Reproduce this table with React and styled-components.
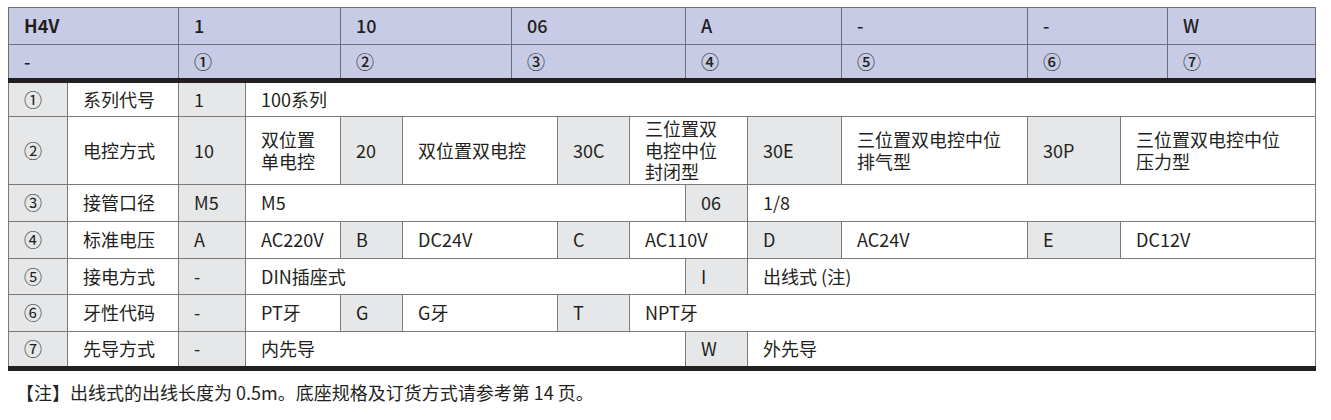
import React from 'react'
import styled, { createGlobalStyle } from 'styled-components'

const GlobalStyle = createGlobalStyle`
  body {
    margin: 0;
    background: #fff;
    font-family: "Noto Sans CJK SC", "Noto Sans", sans-serif;
    color: #231f20;
  }
`

const Page = styled.div`
  padding: 7px 8px 0 8px;
  width: 1307px;
`

const Table = styled.table`
  width: 1307px;
  table-layout: fixed;
  border-collapse: collapse;
  font-size: 18px;
  line-height: 21.6px;
  border-bottom: 5px solid #231f20;
`

const HeadRow = styled.tr`
  height: ${(p) => p.$h}px;
  background: #c8cbe6;
  ${(p) => p.$last && 'border-bottom: 5px solid #231f20;'}
`

const HeadCell = styled.th`
  text-align: left;
  font-weight: ${(p) => (p.$bold ? 600 : 500)};
  padding: 0 15px;
  border: 1px solid #6f6f78;
  vertical-align: middle;
`

const Row = styled.tr`
  height: ${(p) => p.$h}px;
`

const Cell = styled.td`
  padding: 0 15px;
  border: 1px solid #7a7a7a;
  background: ${(p) => (p.$shade ? '#e6e7e8' : '#fff')};
  vertical-align: middle;
  white-space: nowrap;
`

const Note = styled.p`
  margin: 10px 0 0 0;
  padding-left: 8px;
  font-size: 18px;
  line-height: 22px;
`

const widths = [59, 111, 67, 95, 62, 109, 46, 72, 56, 62, 94, 186, 93, 47, 148]

const codes = [
  { code: 'H4V', sub: '-', span: 2, bold: true },
  { code: '1', sub: '①', span: 2 },
  { code: '10', sub: '②', span: 2 },
  { code: '06', sub: '③', span: 3 },
  { code: 'A', sub: '④', span: 2 },
  { code: '-', sub: '⑤', span: 1 },
  { code: '-', sub: '⑥', span: 2 },
  { code: 'W', sub: '⑦', span: 1 },
]

// each cell: [text, colSpan, shaded]
const rows = [
  { h: 36, cells: [['①', 1, 1], ['系列代号'], ['1', 1, 1], ['100系列', 12]] },
  {
    h: 68,
    cells: [
      ['②', 1, 1], ['电控方式'], ['10', 1, 1], ['双位置\n单电控'], ['20', 1, 1], ['双位置双电控', 2],
      ['30C', 1, 1], ['三位置双\n电控中位\n封闭型', 2], ['30E', 1, 1], ['三位置双电控中位\n排气型'],
      ['30P', 1, 1], ['三位置双电控中位\n压力型', 2],
    ],
  },
  { h: 37, cells: [['③', 1, 1], ['接管口径'], ['M5', 1, 1], ['M5', 6], ['06', 1, 1], ['1/8', 5]] },
  {
    h: 37,
    cells: [
      ['④', 1, 1], ['标准电压'], ['A', 1, 1], ['AC220V'], ['B', 1, 1], ['DC24V', 2], ['C', 1, 1],
      ['AC110V', 2], ['D', 1, 1], ['AC24V'], ['E', 1, 1], ['DC12V', 2],
    ],
  },
  { h: 36, cells: [['⑤', 1, 1], ['接电方式'], ['-', 1, 1], ['DIN插座式', 6], ['I', 1, 1], ['出线式 (注)', 5]] },
  {
    h: 37,
    cells: [['⑥', 1, 1], ['牙性代码'], ['-', 1, 1], ['PT牙'], ['G', 1, 1], ['G牙', 2], ['T', 1, 1], ['NPT牙', 8]],
  },
  { h: 37, cells: [['⑦', 1, 1], ['先导方式'], ['-', 1, 1], ['内先导', 6], ['W', 1, 1], ['外先导', 5]] },
]

const Lines = ({ text }) =>
  text.split('\n').map((t, i, a) => (
    <React.Fragment key={i}>
      {t}
      {i < a.length - 1 && <br />}
    </React.Fragment>
  ))

export default function App() {
  return (
    <Page>
      <GlobalStyle />
      <Table>
        <colgroup>
          {widths.map((w, i) => (
            <col key={i} style={{ width: w }} />
          ))}
        </colgroup>
        <thead>
          <HeadRow $h={37}>
            {codes.map((c, i) => (
              <HeadCell key={i} colSpan={c.span} $bold={c.bold}>
                {c.code}
              </HeadCell>
            ))}
          </HeadRow>
          <HeadRow $h={36} $last>
            {codes.map((c, i) => (
              <HeadCell key={i} colSpan={c.span}>
                {c.sub}
              </HeadCell>
            ))}
          </HeadRow>
        </thead>
        <tbody>
          {rows.map((r, i) => (
            <Row key={i} $h={r.h}>
              {r.cells.map(([t, span = 1, shade], j) => (
                <Cell key={j} colSpan={span} $shade={!!shade}>
                  <Lines text={t} />
                </Cell>
              ))}
            </Row>
          ))}
        </tbody>
      </Table>
      <Note>【注】出线式的出线长度为 0.5m。底座规格及订货方式请参考第 14 页。</Note>
    </Page>
  )
}
